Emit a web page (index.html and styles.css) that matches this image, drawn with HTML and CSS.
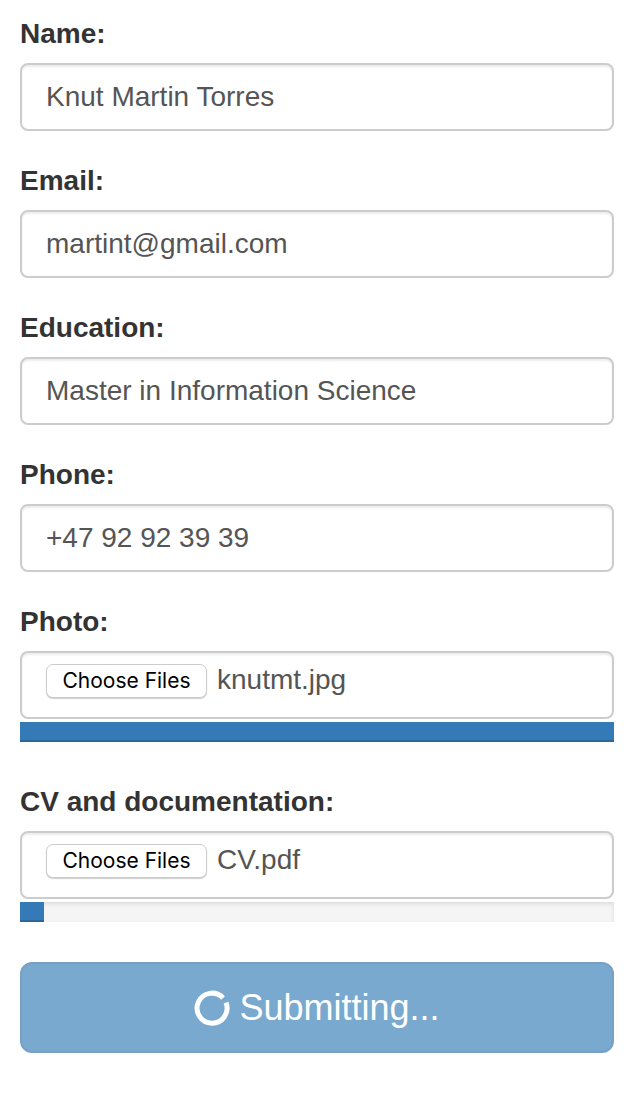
FILE: index.html
```
<!DOCTYPE html>
<html lang="en">
<head>
<meta charset="utf-8">
<meta name="viewport" content="width=device-width, initial-scale=1">
<title>Application form</title>
<link rel="stylesheet" href="styles.css">
</head>
<body>
<form class="form">
  <div class="group">
    <label class="label" for="name">Name:</label>
    <input class="control" id="name" type="text" value="Knut Martin Torres">
  </div>
  <div class="group">
    <label class="label" for="email">Email:</label>
    <input class="control" id="email" type="email" value="martint@gmail.com">
  </div>
  <div class="group">
    <label class="label" for="education">Education:</label>
    <input class="control" id="education" type="text" value="Master in Information Science">
  </div>
  <div class="group">
    <label class="label" for="phone">Phone:</label>
    <input class="control" id="phone" type="tel" value="+47 92 92 39 39">
  </div>
  <div class="group">
    <label class="label" id="photo-label" for="photo">Photo:</label>
    <div class="control file">
      <button class="choose" id="photo" type="button">Choose Files</button>
      <span class="filename">knutmt.jpg</span>
    </div>
    <div class="progress" role="progressbar" aria-labelledby="photo-label" aria-valuenow="100"><div class="bar" style="width: 100%"></div></div>
  </div>
  <div class="group">
    <label class="label" id="cv-label" for="cv">CV and documentation:</label>
    <div class="control file">
      <button class="choose" id="cv" type="button">Choose Files</button>
      <span class="filename">CV.pdf</span>
    </div>
    <div class="progress" role="progressbar" aria-labelledby="cv-label" aria-valuenow="4"><div class="bar" style="width: 4%"></div></div>
  </div>
  <button class="submit" type="submit" disabled>
    <svg class="spinner" viewBox="0 0 36 36" aria-hidden="true"><path d="M29.1 8A15 15 0 1 0 32 12.6" fill="none" stroke="#fff" stroke-width="5"/></svg>
    <span>Submitting...</span>
  </button>
</form>
</body>
</html>
```
FILE: styles.css
```
* { box-sizing: border-box; }
body {
  margin: 0;
  background: #fff;
  color: #333;
  font: 28px/40px "Liberation Sans", Arial, sans-serif;
}
.form {
  display: flex;
  flex-direction: column;
  gap: 30px;
  padding: 14px 26px 46px 20px;
}
.group { display: flex; flex-direction: column; }
.label { font-weight: 700; line-height: 40px; margin-bottom: 9px; }
.control {
  width: 100%;
  height: 68px;
  padding: 0 24px;
  border: 2px solid #ccc;
  border-radius: 8px;
  background: #fff;
  box-shadow: inset 0 2px 2px rgba(0, 0, 0, .075);
  color: #555;
  font: inherit;
}
.file { display: flex; align-items: flex-start; gap: 10px; padding-top: 11px; }
.choose {
  width: 161px;
  height: 34px;
  padding: 0;
  border: 1px solid #ccc;
  border-radius: 7px;
  background: #fff;
  box-shadow: 0 1px 1px rgba(0, 0, 0, .2);
  color: #000;
  font: 21px/32px Inter, "Noto Sans", sans-serif;
}
.filename { line-height: 32px; }
.progress {
  height: 20px;
  margin: 3px 0 10px;
  background: #f5f5f5;
  box-shadow: inset 0 2px 4px rgba(0, 0, 0, .1);
}
.bar { height: 100%; background: #337ab7; box-shadow: inset 0 -2px 0 rgba(0, 0, 0, .15); }
.submit {
  display: flex;
  align-items: center;
  justify-content: center;
  gap: 9px;
  height: 91px;
  border: 2px solid #77a0c4;
  border-radius: 12px;
  background: #7aa9d0;
  color: #fff;
  font: 36px/48px "Liberation Sans", Arial, sans-serif;
}
.spinner { width: 36px; height: 36px; }
```
